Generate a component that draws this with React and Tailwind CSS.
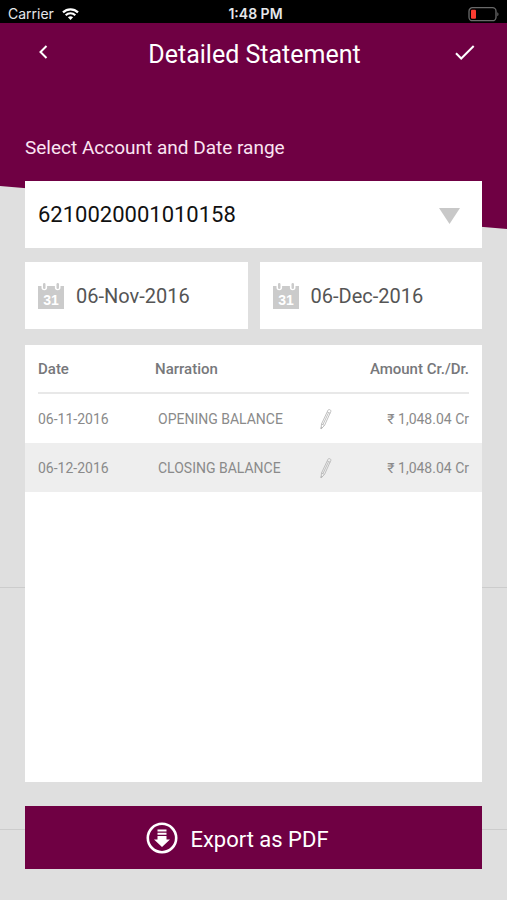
import { useState } from 'react';

const accounts = ['6210020001010158'];

const transactions = [
  { id: 1, date: '06-11-2016', narration: 'OPENING BALANCE', amount: '₹ 1,048.04 Cr' },
  { id: 2, date: '06-12-2016', narration: 'CLOSING BALANCE', amount: '₹ 1,048.04 Cr' },
];

function StatusBar() {
  return (
    <div className="grid h-[23px] grid-cols-3 items-center bg-black px-2 pt-1 font-['Inter',sans-serif] text-[14px] leading-5 text-gray-200">
      <div className="flex items-center gap-2">
        <span>Carrier</span>
        <svg className="h-3 w-[17px]" viewBox="0 0 17 12" fill="none" stroke="white" strokeWidth="2.2">
          <path d="M1 4.4C5.2.3 11.8.3 16 4.4" />
          <path d="M3.7 7.2c2.700-2.600 6.900-2.600 9.600 0" />
          <path d="M8.500 12 5.900 9.300c1.500-1.400 3.700-1.400 5.200 0z" fill="white" stroke="none" />
        </svg>
      </div>
      <span className="pl-1 text-center font-semibold">1:48 PM</span>
      <svg className="h-[15px] w-8 justify-self-end" viewBox="1 1 32 15" fill="none">
        <rect x="3" y="1.700" width="27" height="13" rx="3.500" stroke="#6a6a6a" strokeWidth="1.300" />
        <rect x="5" y="3.700" width="5" height="9" rx="1" fill="#fb3b30" />
        <path d="M31.300 6.200c1.600.6 1.600 3.400 0 4z" fill="#6a6a6a" />
      </svg>
    </div>
  );
}

// slanted header plus the faint lines that run behind the cards
function Backdrop() {
  return (
    <div className="absolute inset-0 -z-10 bg-[#dfdfdf]">
      <svg className="h-[229px] w-full" viewBox="0 0 507 229" preserveAspectRatio="none">
        <path d="M0 0h507v229L0 186z" fill="#6f0043" />
      </svg>
      <div className="absolute inset-x-0 bottom-[312px] h-px bg-[#cccccc]" />
      <div className="absolute inset-x-0 bottom-[70px] h-px bg-[#cccccc]" />
    </div>
  );
}

function CalendarIcon() {
  return (
    <svg className="h-[26px] w-[26px] shrink-0" viewBox="0 0 26 26">
      <path
        d="M0 3h3.500v1.500a2.800 2.800 0 0 0 5.600 0V3h7.800v1.500a2.800 2.800 0 0 0 5.600 0V3H26v23H0z"
        fill="#cbcbcb"
      />
      <rect x="5" y="0" width="2.500" height="6" rx="1.200" fill="#cbcbcb" />
      <rect x="18.500" y="0" width="2.500" height="6" rx="1.200" fill="#cbcbcb" />
      <text
        x="13"
        y="22"
        textAnchor="middle"
        className="fill-white font-['Liberation_Sans',sans-serif] text-[14px] font-bold"
      >
        31
      </text>
    </svg>
  );
}

function PencilIcon() {
  return (
    <svg className="h-[22px] w-3" viewBox="0 0 12 22" fill="none" stroke="#b9b9b9" strokeWidth="0.900">
      <path d="M1 21l.5-5L8 2.200C8.600.8 11.500 1.900 10.800 3.500L4.500 17.500z" />
      <path d="M7.200 4l3 1.300M1.500 16l3 1.500M8.300 5.200L3 16.500" />
      <path d="M1 21l.3-2 1.200.6z" fill="#b9b9b9" />
    </svg>
  );
}

function DateField({ label, value, onChange }) {
  return (
    <label className="flex h-[67px] min-w-0 flex-1 items-center gap-3 bg-white px-[13px]">
      <CalendarIcon />
      <input
        type="text"
        aria-label={label}
        value={value}
        onChange={e => onChange(e.target.value)}
        className="w-full min-w-0 bg-transparent text-xl text-[#555555] outline-none"
      />
    </label>
  );
}

function StatementTable({ rows }) {
  return (
    <table className="w-full table-fixed text-[14px] text-[#8a8a8a]">
      <thead className="text-[15px] text-[#77787b]">
        <tr>
          <th className="w-[130px] pl-[13px] text-left font-medium">
            <div className="h-[49px] border-b-2 border-[#e8e8e8] leading-[49px]">Date</div>
          </th>
          <th className="text-left font-medium">
            <div className="h-[49px] border-b-2 border-[#e8e8e8] leading-[49px]">Narration</div>
          </th>
          <th className="w-10">
            <div className="h-[49px] border-b-2 border-[#e8e8e8]" />
          </th>
          <th className="w-[126px] pr-[13px] text-right font-medium">
            <div className="h-[49px] border-b-2 border-[#e8e8e8] leading-[49px]">Amount Cr./Dr.</div>
          </th>
        </tr>
      </thead>
      <tbody>
        {rows.map(row => (
          <tr key={row.id} className="h-[49px] even:bg-[#eeeeee]">
            <td className="pt-0.5 pl-[13px]">{row.date}</td>
            <td className="pt-0.5 pl-[3px]">{row.narration}</td>
            <td>
              <button type="button" aria-label="Edit narration" className="block p-1">
                <PencilIcon />
              </button>
            </td>
            <td className="pt-0.5 pr-[13px] text-right">{row.amount}</td>
          </tr>
        ))}
      </tbody>
    </table>
  );
}

export default function App() {
  const [account, setAccount] = useState(accounts[0]);
  const [from, setFrom] = useState('06-Nov-2016');
  const [to, setTo] = useState('06-Dec-2016');

  return (
    <div className="relative isolate flex min-h-screen flex-col font-['Roboto',sans-serif]">
      <Backdrop />
      <StatusBar />

      <header className="flex h-[58px] items-center justify-between px-8 text-white">
        <button type="button" aria-label="Back" className="p-1">
          <svg className="h-[14px] w-[14px]" viewBox="0 0 14 14" fill="none" stroke="currentColor" strokeWidth="2">
            <path d="M10.500 1 4.500 7l6 6" />
          </svg>
        </button>
        <h1 className="pt-1.5 text-[25px] leading-8">Detailed Statement</h1>
        <button type="button" aria-label="Done">
          <svg className="h-[15px] w-5" viewBox="0 0 20 15" fill="none" stroke="currentColor" strokeWidth="2">
            <path d="M1 8.200 6.200 13.500 18.700 1" />
          </svg>
        </button>
      </header>

      <main className="flex flex-1 flex-col px-[25px] pt-[54px] pb-[31px]">
        <h2 className="text-[19px] leading-[26px] text-[#fbe4f2]">Select Account and Date range</h2>

        <div className="relative mt-5">
          <select
            aria-label="Account"
            value={account}
            onChange={e => setAccount(e.target.value)}
            className="h-[67px] w-full appearance-none bg-white px-[13px] text-[22px] text-[#111111] outline-none"
          >
            {accounts.map(number => (
              <option key={number} value={number}>
                {number}
              </option>
            ))}
          </select>
          <svg className="pointer-events-none absolute top-[27px] right-[22px] h-4 w-[21px]" viewBox="0 0 21 16">
            <path d="M0 0h21L10.500 16z" fill="#c8c8c8" />
          </svg>
        </div>

        <div className="mt-[14px] flex gap-3">
          <DateField label="From date" value={from} onChange={setFrom} />
          <DateField label="To date" value={to} onChange={setTo} />
        </div>

        <section className="mt-4 flex-1 bg-white">
          <StatementTable rows={transactions} />
        </section>

        <button
          type="button"
          className="mt-6 flex h-[63px] items-center justify-center gap-3 bg-[#6f0043] pr-8 text-[22px] text-white"
        >
          <svg className="h-8 w-8" viewBox="0 0 32 32" fill="none">
            <circle cx="16" cy="16" r="14.200" stroke="white" strokeWidth="2.600" />
            <path d="M11.500 7.500h9v2h-9zM11.500 10.700h9v2h-9zM11.500 14h9v3.500H24L16 25l-8-7.500h3.500z" fill="white" />
          </svg>
          <span className="pt-1">Export as PDF</span>
        </button>
      </main>
    </div>
  );
}
